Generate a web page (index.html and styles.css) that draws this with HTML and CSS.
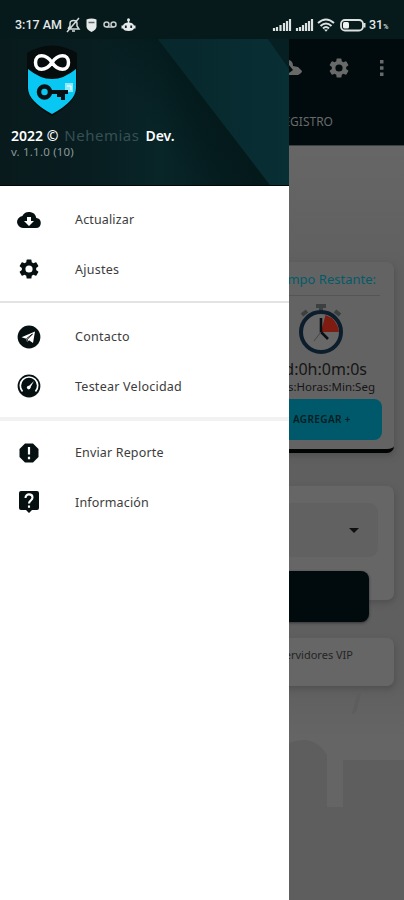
FILE: index.html
```html
<!DOCTYPE html>
<html lang="es">
<head>
<meta charset="utf-8">
<title>Menú</title>
<link rel="stylesheet" href="styles.css">
</head>
<body>
<div class="phone">
  <header class="status">
    <span class="clock">3:17 AM</span>
    <svg class="st-left" width="72" height="16" viewBox="0 0 72 16">
      <g fill="none" stroke="#d5dbdb" stroke-width="1.5"><path d="M2 12h11l-2-3V6.500C11 2.500 4 2.500 4 6.500V9l-2 3M6 14h3M13 1L1 15"/></g>
      <path d="M20.500 2.500q5-2 10 0v7q0 3-5 5.500q-5-2.500-5-5.500z" fill="#e5eaea"/><path d="M22.500 5.500h6" stroke="#5c696a" stroke-width="1.500"/>
      <g fill="none" stroke="#c4caca" stroke-width="1.500"><circle cx="40.500" cy="7.500" r="2.500"/><circle cx="47.500" cy="7.500" r="2.500"/><path d="M40.500 10h7"/></g>
      <path d="M57 8.500q1-3 5.500-3t5.500 3h1.500v3H68q-1 2.500-5.500 2.500T57 11.500h-1.500v-3z" fill="#e5eaea"/><path d="M62.500 6V3" stroke="#e5eaea" stroke-width="1.500"/><circle cx="62.500" cy="2.800" r="1.500" fill="#e5eaea"/><path d="M59.800 8.500v2.500M65.200 8.500v2.500" stroke="#172425" stroke-width="1.800"/>
    </svg>
    <svg class="st-right" width="96" height="16" viewBox="0 0 96 16">
      <g stroke="#dce2e2" stroke-width="2.200"><path d="M2 14v-3M5 14v-4M8.500 14V8M12 14V6M15 14V4M18 14V2"/><path d="M25 14v-3M28 14v-4M31 14V8M34 14V6M37 14V4M40 14V2"/></g>
      <g fill="none" stroke="#dce2e2" stroke-width="2"><path d="M46 6q8-7 16 0M48.500 9q5.500-5 11 0M51 11.500q3-3 6 0"/></g><path d="M52 12.500h4l-2 2.200z" fill="#dce2e2"/>
      <rect x="69" y="3" width="22" height="10.500" rx="4" fill="none" stroke="#dce2e2" stroke-width="1.800"/><rect x="71" y="5" width="6" height="6.500" rx="1.500" fill="#eef2f2"/><path d="M92.500 6v4.500" stroke="#dce2e2" stroke-width="2"/>
    </svg>
    <span class="charge">31<small>%</small></span>
  </header>
  <div class="body">
    <nav class="drawer">
      <div class="hero">
        <svg class="shade" width="289" height="146" viewBox="0 0 289 146" preserveAspectRatio="none">
          <defs>
            <linearGradient id="a" x1="0" y1="0" x2="1" y2="0"><stop offset="0" stop-color="#081a1c"/><stop offset=".3" stop-color="#081d20"/><stop offset=".55" stop-color="#082528"/><stop offset="1" stop-color="#04191b"/></linearGradient>
            <linearGradient id="b" x1="0" y1="0" x2="1" y2="0"><stop offset="0" stop-color="#07272b"/><stop offset="1" stop-color="#082f34"/></linearGradient>
            <linearGradient id="c" gradientUnits="userSpaceOnUse" x1="165" y1="110" x2="225" y2="70"><stop offset="0" stop-color="#041719" stop-opacity="0"/><stop offset="1" stop-color="#03191a"/></linearGradient>
          </defs>
          <path d="M0 0h289v146H0z" fill="url(#a)"/>
          <path d="M90 0h68l112 146H170z" fill="url(#c)"/>
          <path d="M158 0h131v146h-19z" fill="url(#b)"/>
          <path d="M268 0h21v30z" fill="#051f22"/>
        </svg>
        <svg class="logo" width="52" height="72" viewBox="0 0 52 72">
          <path d="M1 8Q26-7 51 8v34q0 15-25 29Q1 57 1 42z" fill="#060b0c"/>
          <path d="M2 24q24 20 48 0v19q0 13-24 26Q2 56 2 43z" fill="#08c8f3"/>
          <path d="M26 17.500C20 8.500 9.500 8.500 9.500 17.500s10.500 9 16.500 0s16.500-9 16.500 0s-10.500 9-16.500 0z" fill="none" stroke="#fff" stroke-width="3.500"/>
          <path d="M39 38h8v9h-8z" fill="#8ce8fa"/><path d="M41 41h4v4" fill="none" stroke="#fff"/>
          <circle cx="18.500" cy="47" r="5.500" fill="none" stroke="#071113" stroke-width="4.500"/><path d="M23 47h19M37 47v8M33 48v4" fill="none" stroke="#071113" stroke-width="4"/>
        </svg>
        <div class="owner"><b>2022 ©</b><span>Nehemias</span><b>Dev.</b></div>
        <div class="version">v. 1.1.0 (10)</div>
      </div>
      <ul class="menu first">
        <li><svg viewBox="0 0 24 24"><path d="M19.350 10.040A7.490 7.490 0 0 0 5.350 8.040 6 6 0 0 0 6 20h13a5 5 0 0 0 .350-9.960zM17 13l-5 5-5-5h3V9h4v4z"/></svg><span>Actualizar</span></li>
        <li><svg viewBox="0 0 24 24"><use href="#gear"/></svg><span class="wide">Ajustes</span></li>
      </ul>
      <ul class="menu second">
        <li><svg viewBox="0 0 24 24"><circle cx="12" cy="12" r="11.400"/><path d="M4.500 12.300L18 6.500 16 18l-4-2.800-2 2-.600-3.500z" fill="#fff"/><path d="M9.400 13.700L15.500 9l-5 5.200-.500 3" fill="none" stroke="#061011" stroke-width=".9"/></svg><span class="wide">Contacto</span></li>
        <li><svg viewBox="0 0 24 24"><circle cx="12" cy="12" r="11.400"/><path d="M5.500 17.500a8.700 8.700 0 1 1 13 0" fill="none" stroke="#fff" stroke-width="1.700"/><path d="M10.300 13.500L17 7l-4.500 8z" fill="#fff"/><circle cx="11.700" cy="13.600" r="1.800" fill="#fff"/></svg><span class="wide">Testear Velocidad</span></li>
      </ul>
      <ul class="menu third">
        <li><svg viewBox="0 0 24 24"><path d="M8 2.500h8L21.500 8v8L16 21.500H8L2.500 16V8z"/><path d="M12 6v7.500M12 15.800v2.400" stroke="#fff" stroke-width="2.200"/></svg><span>Enviar Reporte</span></li>
        <li><svg viewBox="0 0 24 24"><path d="M4 1h16a2 2 0 0 1 2 2v15a2 2 0 0 1-2 2h-5l-3 3-3-3H4a2 2 0 0 1-2-2V3a2 2 0 0 1 2-2z"/><path d="M8.500 8c0-5 7-4.500 7-.500 0 3-3.500 3-3.500 6M12 15.500v2.200" fill="none" stroke="#fff" stroke-width="2.100"/></svg><span>Información</span></li>
      </ul>
    </nav>
    <main class="page">
      <div class="appbar">
        <div class="tools">
          <svg width="14" height="20" viewBox="0 0 14 20"><path d="M0 2q4 1 4 6l5 1 4 4q0 2-4 4H0v-2l4-3-4-5z" fill="#686a6a"/></svg>
          <svg class="cog" width="24" height="24" viewBox="0 0 24 24" fill="#686a6a"><path id="gear" d="M19.140 12.940c.040-.300.060-.610.060-.940s-.020-.640-.070-.940l2.030-1.580a.49.49 0 0 0 .120-.610l-1.920-3.320a.49.49 0 0 0-.590-.220l-2.390.960a7 7 0 0 0-1.620-.940l-.360-2.540A.48.48 0 0 0 13.920 2.400h-3.840a.47.47 0 0 0-.470.410l-.360 2.540a7.200 7.200 0 0 0-1.620.940l-2.390-.960a.48.48 0 0 0-.590.220L2.740 8.870a.47.47 0 0 0 .120.610l2.030 1.580a6 6 0 0 0 0 1.880l-2.030 1.580a.49.49 0 0 0-.120.610l1.920 3.320c.120.220.370.290.590.220l2.390-.960c.5.380 1.030.7 1.620.940l.360 2.540c.050.240.240.410.480.410h3.840c.240 0 .440-.170.470-.410l.360-2.540a7 7 0 0 0 1.620-.940l2.390.960c.220.080.470 0 .590-.220l1.920-3.320a.47.47 0 0 0-.120-.610zM12 15.600a3.600 3.600 0 1 1 0-7.200 3.600 3.600 0 0 1 0 7.200z"/></svg>
          <svg width="4" height="20" viewBox="0 0 4 20" fill="#686a6a"><path d="M0 2h3.500v3.500H0zM0 8.200h3.500v3.500H0zM0 14.500h3.500V18H0z"/></svg>
        </div>
        <div class="tab">REGISTRO</div>
      </div>
      <section class="card time">
        <h2>Tiempo Restante:</h2>
        <svg class="watch" width="46" height="52" viewBox="0 0 46 52">
          <path d="M18 3h10M23 3v6" stroke="#3d4041" stroke-width="4"/><path d="M4 12l5-4M42 12l-5-4" stroke="#3d4041" stroke-width="4"/>
          <circle cx="23" cy="29" r="20" fill="#686868" stroke="#0c1d2b" stroke-width="4"/>
          <path d="M23 29l4.500-17q12 4 13.500 17z" fill="#7f1c11"/>
          <path d="M23 15v14l7 7" fill="none" stroke="#0a0f13" stroke-width="2.600"/><path d="M23 29l-7 9" stroke="#454545"/>
        </svg>
        <div class="left">0d:0h:0m:0s</div>
        <div class="units">Dias:Horas:Min:Seg</div>
        <div class="add">AGREGAR +</div>
      </section>
      <section class="card pick">
        <div class="select"><i></i></div>
        <div class="start"></div>
      </section>
      <section class="card vip">Servidores VIP</section>
      <svg class="floor" width="115" height="214" viewBox="0 0 115 214"><path d="M0 57q25-10 38 12v52h16V74h61v140H0z" fill="#5e5e5e"/><path d="M68 8l4 0-5 18-4 2z" fill="#5d5d5d"/></svg>
    </main>
  </div>
</div>
</body>
</html>
```
FILE: styles.css
```css
* { box-sizing: border-box; }
body { margin: 0; font-family: "Noto Sans", "Open Sans", sans-serif; }
.phone { width: 404px; height: 900px; overflow: hidden; display: flex; flex-direction: column; }
.status { height: 39px; background: #06191b; color: #e3e8e8; display: flex; align-items: flex-start; padding: 17px 0 0 15px; font: 500 12.5px/16px Roboto, sans-serif; white-space: nowrap; }
.clock { width: 51px; }
.st-right { margin-left: 134px; }
.charge { margin-left: 1px; }
.charge small { font-size: 7px; }
.body { flex: 1; display: grid; grid-template-columns: 289px 115px; }
.drawer { background: #fff; min-width: 0; }
.hero { height: 147px; padding: 6px 0 0 11px; position: relative; border-bottom: 2px solid #020707; }
.shade { position: absolute; left: 0; top: 0; }
.logo { position: relative; display: block; margin-left: 15px; }
.owner { position: relative; display: flex; gap: 6px; margin-top: 9px; color: #fff; line-height: 19px; white-space: nowrap; }
.owner b { font-weight: 600; font-size: 14px; }
.owner span { color: #365054; font-size: 15px; letter-spacing: .5px; }
.version { position: relative; color: #8b9899; font-size: 11.5px; line-height: 14px; letter-spacing: .2px; }
.menu { list-style: none; margin: 0; padding: 0; }
.first { height: 117px; padding-top: 9px; border-bottom: 2px solid #e3e3e3; }
.second { height: 118px; padding-top: 9px; border-bottom: 4px solid #f2f2f2; }
.third { padding-top: 7px; }
.menu li { height: 49.5px; display: flex; align-items: center; padding-left: 17px; color: #3c3c3c; font-size: 12.5px; white-space: nowrap; }
.menu svg { width: 24px; height: 24px; margin-right: 34px; fill: #061011; }
.menu span { letter-spacing: .15px; }
.menu .wide { letter-spacing: .25px; }
.page { background: linear-gradient(#666 107px, #5f5f5f 240px, #5f5f5f 640px, #656565 700px); min-width: 0; overflow: hidden; display: flex; flex-direction: column; align-items: flex-end; }
.appbar { width: 115px; height: 107px; flex: none; background: #010a0c; color: #686a6a; border-bottom: 1px solid #394041; }
.tools { height: 57px; padding-right: 20px; display: flex; align-items: center; }
.cog { margin: 0 29px 0 24px; }
.tab { margin: 17px 71px 0 0; font-size: 12px; line-height: 18px; display: flex; justify-content: flex-end; }
.card { width: 160px; flex: none; margin-right: 10px; border-radius: 7px; background: #666; box-shadow: 1px 3px 6px #505050; }
.time { height: 191px; margin-top: 116px; background: #636363; border-bottom: 4px solid #020303; display: flex; flex-direction: column; align-items: flex-end; color: #151515; }
.time h2 { width: 146px; height: 34px; margin: 0 14px 0 0; padding: 6px 4px 0 0; border-bottom: 1px solid #555; color: #035b69; font-size: 13px; line-height: 22px; font-weight: 400; text-align: right; white-space: nowrap; }
.watch { margin: 7px 50px 0 0; flex: none; }
.left { margin-right: 27px; font-size: 16px; line-height: 19px; margin-top: 5px; }
.units { margin-right: 19px; font-size: 11.5px; line-height: 15px; white-space: nowrap; }
.add { width: 150px; height: 41px; flex: none; margin: 5px 12px 0 0; padding-right: 31px; border-radius: 8px; background: #00596a; color: #061d22; font-size: 10px; font-weight: 600; letter-spacing: .4px; line-height: 41px; text-align: right; }
.pick { height: 114px; margin-top: 33px; padding-top: 17px; display: flex; flex-direction: column; align-items: flex-end; }
.select { width: 144px; height: 54px; flex: none; margin-right: 16px; border-radius: 9px; background: #616161; display: flex; align-items: center; justify-content: flex-end; padding-right: 19px; }
.select i { border: 5px solid transparent; border-top-color: #101010; border-bottom: 0; }
.start { width: 135px; height: 51px; flex: none; margin: 14px 25px 0 0; border-radius: 8px; background: #010a0c; box-shadow: 0 1px 3px #333; }
.vip { height: 48px; margin-top: 38px; padding: 8px 41px 0 0; color: #242424; font-size: 11px; line-height: 17px; text-align: right; }
.floor { flex: none; }
```
